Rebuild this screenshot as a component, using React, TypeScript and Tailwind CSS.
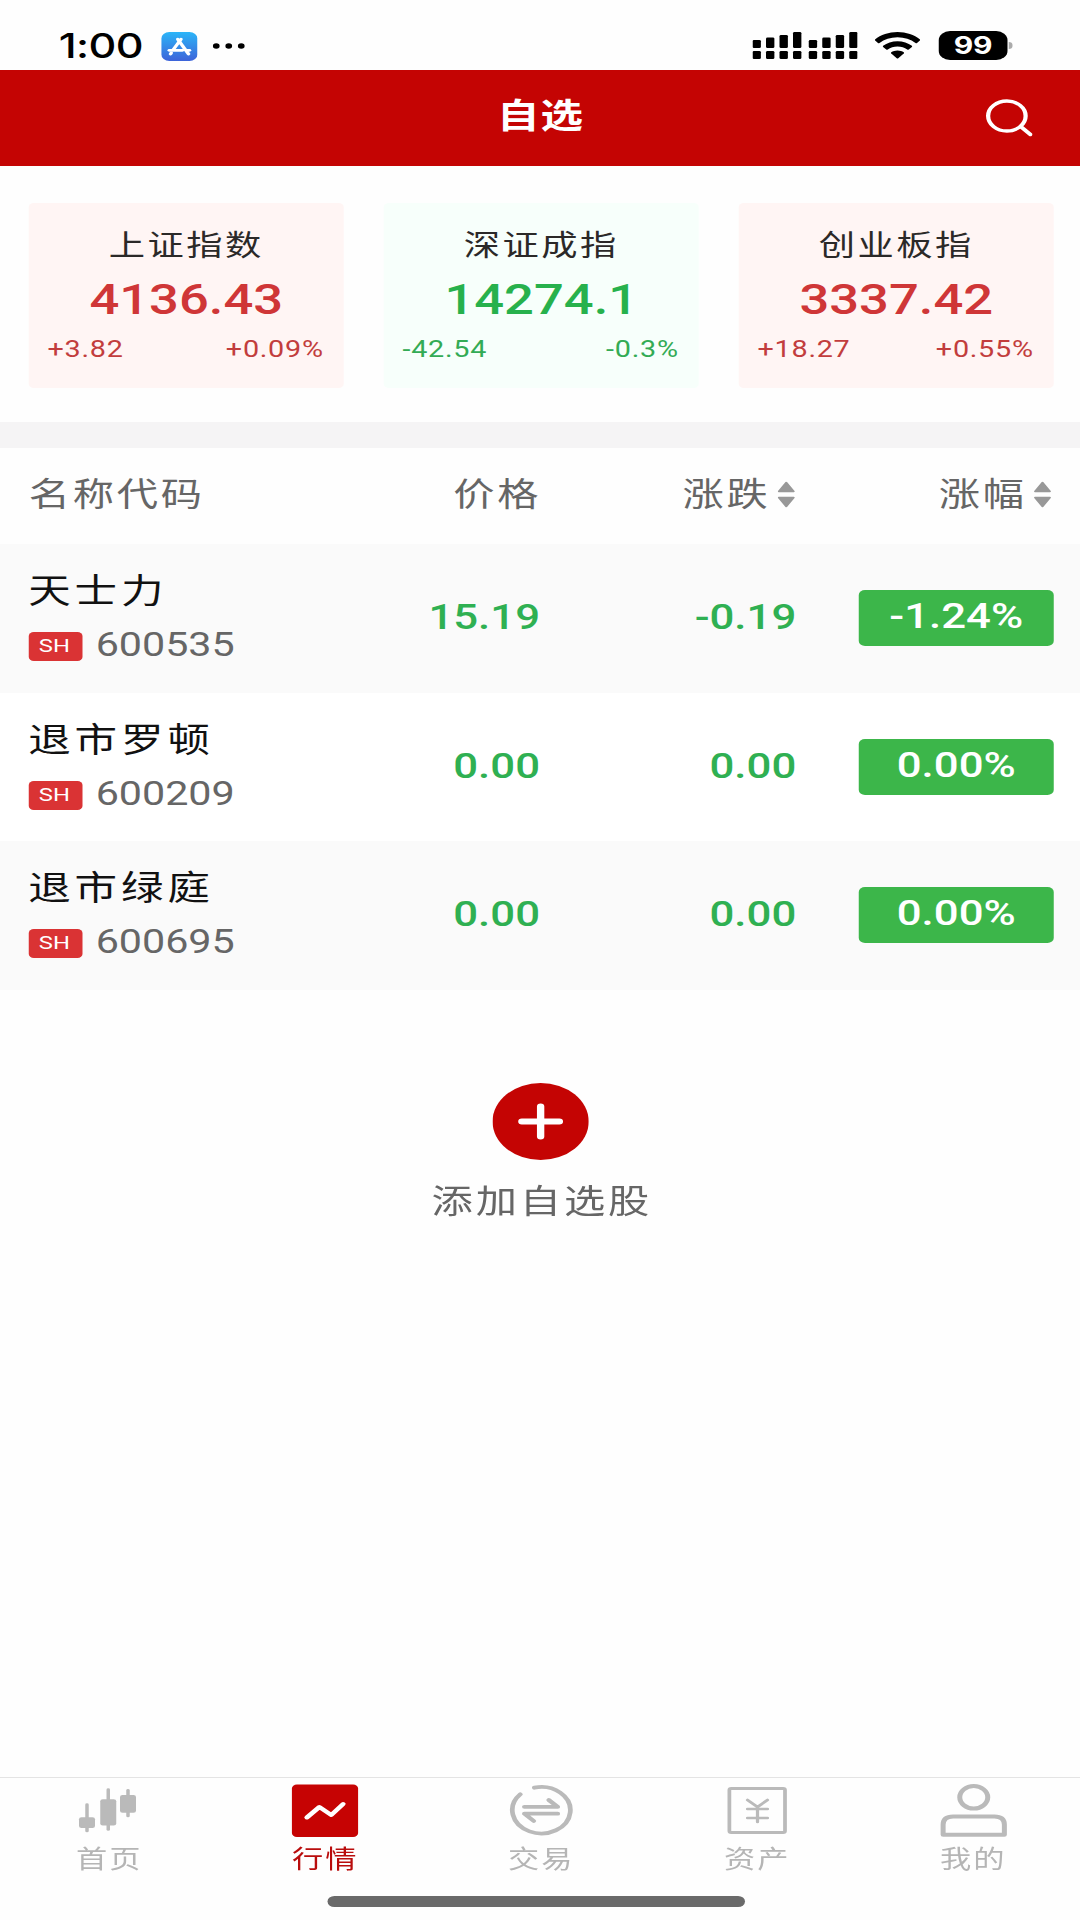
import React from "react";

type Trend = "up" | "down";

const indices: { name: string; value: string; change: string; percent: string; trend: Trend }[] = [
  { name: "上证指数", value: "4136.43", change: "+3.82", percent: "+0.09%", trend: "up" },
  { name: "深证成指", value: "14274.1", change: "-42.54", percent: "-0.3%", trend: "down" },
  { name: "创业板指", value: "3337.42", change: "+18.27", percent: "+0.55%", trend: "up" },
];

const stocks = [
  { name: "天士力", code: "600535", price: "15.19", change: "-0.19", percent: "-1.24%" },
  { name: "退市罗顿", code: "600209", price: "0.00", change: "0.00", percent: "0.00%" },
  { name: "退市绿庭", code: "600695", price: "0.00", change: "0.00", percent: "0.00%" },
];

function StatusBar() {
  const bars = [8, 10.5, 13, 16];
  return (
    <div className="flex h-[70px] items-start pl-[47px] pr-[54px] pt-[31px] text-black">
      <span className="h-[30px] w-[82px] whitespace-nowrap font-['Inter'] text-[34.500px] font-medium leading-[30px] tracking-[-0.500px]">
        1:00
      </span>
      <svg className="mt-px h-[29px] w-[29px]" viewBox="0 0 29 29">
        <defs>
          <linearGradient id="store" x1="0" y1="0" x2="0" y2="1">
            <stop offset="0" stopColor="#2bb5f8" />
            <stop offset="1" stopColor="#3d63d9" />
          </linearGradient>
        </defs>
        <rect width="29" height="29" rx="6.5" fill="url(#store)" />
        <g stroke="#fff" strokeWidth="2.8" strokeLinecap="round" fill="none">
          <path d="M15.8 7.3 L9.6 17.6" />
          <path d="M13.2 7.3 L21.8 22" />
          <path d="M6.4 18.3 H17" />
          <path d="M20.6 18.3 H22.6" />
          <path d="M8 21 L7.4 22" />
        </g>
      </svg>
      <svg className="ml-[12px] mt-[12px] h-[6px] w-[26px]" viewBox="0 0 26 6">
        <circle cx="3" cy="3" r="2.7" />
        <circle cx="13" cy="3" r="2.7" />
        <circle cx="23" cy="3" r="2.7" />
      </svg>
      <div className="grow" />
      <svg className="mt-[1px] h-[28px] w-[84px]" viewBox="0 0 84 28">
        {[0, 45].map((x) =>
          bars.map((h, i) => (
            <g key={`${x}-${i}`}>
              <rect x={x + i * 10.8} y={16 - h} width="6.7" height={h} rx="1.2" />
              <rect x={x + i * 10.8} y="19" width="6.7" height="8" rx="1.2" />
            </g>
          )),
        )}
      </svg>
      <svg className="ml-[14px] mt-[0.5px] h-[28px] w-[36px]" viewBox="0 0 36 28">
        <path d="M18 0 C25 0 31.4 2.8 36 7.4 Q36.4 8 35.9 8.6 L33.6 11 Q33 11.4 32.4 10.9 C28.600 7.300 23.600 5.200 18 5.200 C12.400 5.200 7.400 7.300 3.600 10.900 Q3 11.400 2.400 11 L0.100 8.600 Q-0.400 8 0 7.400 C4.600 2.800 11 0 18 0 Z" />
        <path d="M18 9.200 C22.400 9.200 26.500 11 29.500 13.800 Q30 14.400 29.500 15 L27 17.500 Q26.400 18 25.800 17.500 C23.700 15.600 21 14.400 18 14.400 C15 14.400 12.300 15.600 10.200 17.500 Q9.600 18 9 17.500 L6.500 15 Q6 14.400 6.500 13.800 C9.500 11 13.600 9.200 18 9.200 Z" />
        <path d="M18 18.400 C19.900 18.400 21.700 19.100 23 20.300 Q23.500 20.900 23 21.500 L18.600 26.200 Q18 26.800 17.400 26.200 L13 21.500 Q12.500 20.900 13 20.300 C14.300 19.100 16.100 18.400 18 18.400 Z" />
      </svg>
      <div className="ml-[15px] flex h-[29px] w-[55px] items-center justify-center rounded-[9px] bg-black font-['Inter'] text-[24px] font-bold leading-none text-white">
        99
      </div>
      <div className="ml-[1px] mt-[11px] h-[7px] w-[3px] rounded-r-full bg-[#ababab]" />
    </div>
  );
}

function Header() {
  return (
    <header className="grid h-[96px] grid-cols-[1fr_auto_1fr] items-center bg-[#c40403] text-white">
      <span />
      <h1 className="pb-[4px] pl-[1px] text-[34px] font-bold leading-[40px] tracking-[1px]">自选</h1>
      <svg className="mr-[38px] h-[38px] w-[38px] justify-self-end" viewBox="0 0 38 38" fill="none" stroke="#fff" strokeWidth="3.400" strokeLinecap="round">
        <circle cx="17.500" cy="17" r="15" />
        <path d="M29 28 L36.300 35.500" />
      </svg>
    </header>
  );
}

function IndexCards() {
  return (
    <section className="flex h-[256px] justify-between pl-[23px] pr-[21px] pt-[37px]">
      {indices.map((it) => (
        <div
          key={it.name}
          className={`flex h-[185px] w-[252px] flex-col rounded-[4px] pt-[23px] ${it.trend === "up" ? "bg-[#fff5f4]" : "bg-[#f7fffb]"}`}
        >
          <div className="text-center text-[29px] leading-[40px] tracking-[2px] text-[#2b2928]">{it.name}</div>
          <div
            className={`mt-[8px] text-center text-[42px] font-medium leading-[52px] ${it.trend === "up" ? "text-[#cf3637]" : "text-[#27b14c]"}`}
          >
            {it.value}
          </div>
          <div
            className={`mt-[8px] flex justify-between pl-[15px] pr-[16px] text-[23px] leading-[32px] tracking-[0.600px] ${it.trend === "up" ? "text-[#c23d3d]" : "text-[#33ab55]"}`}
          >
            <span>{it.change}</span>
            <span>{it.percent}</span>
          </div>
        </div>
      ))}
    </section>
  );
}

function SortArrows() {
  return (
    <svg className="ml-[5.500px] h-[27px] w-[14px]" viewBox="0 0 14 27" fill="#989898" stroke="#989898" strokeWidth="1.500" strokeLinejoin="round">
      <path d="M7 1.500 L13 10.500 H1 Z" />
      <path d="M7 25.500 L13 16.500 H1 Z" />
    </svg>
  );
}

function TableHeader() {
  return (
    <div className="grid h-[96px] grid-cols-[201px_208px_205px_1fr] items-center pb-[3px] pl-[23px] pr-[21px] text-[33px] leading-[44px] tracking-[2.200px] text-[#666]">
      <span>名称代码</span>
      <span className="-mr-px text-right">价格</span>
      <span className="flex items-center justify-end pr-[1px]">涨跌<SortArrows /></span>
      <span className="flex items-center justify-end pr-[2px]">涨幅<SortArrows /></span>
    </div>
  );
}

function StockRow({ stock, shaded }: { stock: (typeof stocks)[number]; shaded: boolean }) {
  return (
    <div
      className={`grid h-[148.500px] grid-cols-[201px_208px_205px_1fr] pl-[23px] pr-[21px] ${shaded ? "bg-[#fafafa]" : "bg-white"}`}
    >
      <div className="-ml-[0.500px] pt-[25px]">
        <div className="whitespace-nowrap text-[34px] leading-[44px] tracking-[3.200px] text-[#111]">{stock.name}</div>
        <div className="mt-[12px] flex h-[40px] items-center">
          <span className="mt-[3px] flex h-[29px] w-[43px] items-center justify-center rounded-[4px] bg-[#da3334] pb-[2px] pr-px text-[19px] leading-none text-white">
            SH
          </span>
          <span className="ml-[11px] text-[33px] leading-[40px] text-[#666]">{stock.code}</span>
        </div>
      </div>
      <div className="pt-[52px] text-right text-[35px] font-medium leading-[44px] text-[#2fb052]">{stock.price}</div>
      <div className="pt-[52px] text-right text-[35px] font-medium leading-[44px] text-[#2fb052]">{stock.change}</div>
      <div className="mt-[46px] flex h-[56px] w-[156px] items-center justify-center justify-self-end rounded-[5px] bg-[#3cb64a] pb-[2px] text-[35px] font-medium leading-[44px] text-white">
        {stock.percent}
      </div>
    </div>
  );
}

function AddStock() {
  return (
    <button className="mt-[93px] flex flex-col items-center self-center">
      <svg className="h-[77px] w-[77px]" viewBox="0 0 77 77">
        <circle cx="38.500" cy="38.500" r="38.500" fill="#c40403" />
        <path d="M38.500 23.500 V53.500 M23.500 38.500 H53.500" stroke="#fff" strokeWidth="5.900" strokeLinecap="round" />
      </svg>
      <span className="mt-[20px] pl-[3px] text-[33px] leading-[44px] tracking-[2.300px] text-[#666]">添加自选股</span>
    </button>
  );
}

const CandleIcon = () => (
  <svg className="h-[54px] w-[54px]" viewBox="0 0 54 54" fill="#bababa">
    <rect x="8.200" y="19.300" width="2.800" height="29" rx="1.400" />
    <rect x="3.200" y="33.200" width="12.800" height="10.800" rx="2" />
    <rect x="25.200" y="4.300" width="2.800" height="42.500" rx="1.400" />
    <rect x="20.200" y="15.200" width="12.800" height="26.200" rx="2" />
    <rect x="41" y="5" width="2.800" height="28.300" rx="1.400" />
    <rect x="36" y="11" width="12.800" height="17.800" rx="2" />
  </svg>
);

const MarketIcon = () => (
  <svg className="h-[54px] w-[54px]" viewBox="0 0 54 54" fill="none">
    <rect x="0.500" y="0.500" width="53" height="52.500" rx="4" fill="#c60303" />
    <path d="M12.500 33.500 L22.500 23 L32 31 L41.500 20" stroke="#fff" strokeWidth="4" strokeLinecap="round" strokeLinejoin="round" />
  </svg>
);

const TradeIcon = () => (
  <svg className="h-[54px] w-[54px]" viewBox="0 0 54 54" fill="none" stroke="#bababa" strokeWidth="3.800" strokeLinecap="round" strokeLinejoin="round">
    <path d="M21.500 3.700 A23.200 23.200 0 1 1 10.200 10.300" />
    <path d="M13.500 22.800 H40.200 L33 16" />
    <path d="M40.200 29.700 H13.500 L21 37" />
  </svg>
);

const AssetIcon = () => (
  <svg className="h-[54px] w-[54px]" viewBox="0 0 54 54" fill="none" stroke="#bababa" strokeWidth="3" strokeLinecap="round" strokeLinejoin="round">
    <rect x="4.500" y="4.500" width="44.500" height="44" rx="1.500" />
    <path d="M19 16 L27 23 L35 16 M27 23 V38 M19 25 H35 M19 34 H35" strokeWidth="2.600" />
  </svg>
);

const ProfileIcon = () => (
  <svg className="h-[54px] w-[54px]" viewBox="0 0 54 54" fill="none" stroke="#bababa" strokeWidth="4" strokeLinejoin="round">
    <circle cx="27" cy="13.300" r="11.200" />
    <path d="M2.500 50.800 V40.500 Q2.500 32.500 10.500 32.500 H43.500 Q51.500 32.500 51.500 40.500 V50.800 Z" />
  </svg>
);

const tabs = [
  { label: "首页", Icon: CandleIcon },
  { label: "行情", Icon: MarketIcon, active: true },
  { label: "交易", Icon: TradeIcon },
  { label: "资产", Icon: AssetIcon },
  { label: "我的", Icon: ProfileIcon },
];

function TabBar() {
  return (
    <footer className="mt-auto h-[143px] border-t border-[#e4e4e4] bg-[#fefefe]">
      <nav className="ml-px grid h-[117.500px] w-[864px] grid-cols-5 pt-[6px]">
        {tabs.map(({ label, Icon, active }) => (
          <div key={label} className="flex flex-col items-center">
            <Icon />
            <span className={`mt-[6px] text-[25px] leading-[32px] tracking-[1.600px] ${active ? "text-[#b90d0d]" : "text-[#b5b5b5]"}`}>
              {label}
            </span>
          </div>
        ))}
      </nav>
      <div className="ml-[261.600px] h-[11px] w-[334.400px] rounded-full bg-[#6a6a6a]" />
    </footer>
  );
}

export default function App() {
  return (
    <div className="h-[1920px] w-[1080px] overflow-hidden bg-white">
      <main className="flex h-[1920px] w-[864px] origin-top-left scale-x-125 flex-col bg-[#fefefe] font-['Roboto','Noto_Sans_CJK_SC',sans-serif]">
        <StatusBar />
        <Header />
        <IndexCards />
        <div className="h-[26px] bg-[#f5f4f5]" />
        <TableHeader />
        {stocks.map((stock, i) => (
          <StockRow key={stock.code} stock={stock} shaded={i % 2 === 0} />
        ))}
        <AddStock />
        <TabBar />
      </main>
    </div>
  );
}
